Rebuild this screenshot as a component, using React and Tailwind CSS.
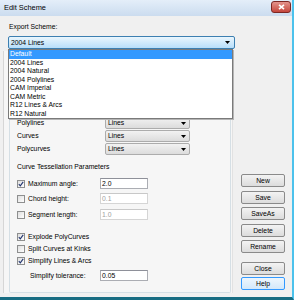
const SCHEMES = [
  "Default",
  "2004 Lines",
  "2004 Natural",
  "2004 Polylines",
  "CAM Imperial",
  "CAM Metric",
  "R12 Lines & Arcs",
  "R12 Natural",
];

function Arrow() {
  return (
    <svg width="5" height="3" viewBox="0 0 5 3" className="shrink-0">
      <path d="M0 0 H5 L2.5 3 Z" fill="#000" />
    </svg>
  );
}

function Combo({ value, className }) {
  return (
    <div
      className={`flex items-center justify-between rounded-[2px] border border-[#acacac] bg-gradient-to-b from-[#f2f2f2] to-[#dcdcdc] pl-[2px] pr-[3px] ${className}`}
    >
      <span>{value}</span>
      <Arrow />
    </div>
  );
}

function Check({ checked }) {
  return (
    <div className="flex h-[8px] w-[8px] shrink-0 items-center justify-center border border-[#8e8f8f] bg-gradient-to-br from-[#dedede] to-[#ffffff]">
      {checked && (
        <svg width="6" height="6" viewBox="0 0 6 6">
          <path d="M0.8 3.2 L2.3 4.8 L5.2 0.9" fill="none" stroke="#21346e" strokeWidth="1.1" />
        </svg>
      )}
    </div>
  );
}

function Field({ value, disabled }) {
  return (
    <div
      className={`flex h-[11px] w-[48px] items-center border border-[#abadb3] border-t-[#8e9099] bg-white pl-[1px] ${
        disabled ? "text-[#a0a0a0] border-[#d5d5d5] border-t-[#c8c8c8]" : ""
      }`}
    >
      {value}
    </div>
  );
}

function CheckRow({ label, checked, children, className = "" }) {
  return (
    <div className={`flex items-center ${className}`}>
      <div className="flex w-[83px] items-center gap-[3px]">
        <Check checked={checked} />
        <span>{label}</span>
      </div>
      {children}
    </div>
  );
}

function Btn({ children, className = "", focus }) {
  return (
    <div
      className={`flex h-[13px] items-center justify-center rounded-[2px] border ${
        focus
          ? "border-[#3399ff] bg-gradient-to-b from-[#eef6fd] to-[#d3e8fa]"
          : "border-[#8a8a8a] bg-gradient-to-b from-[#f3f3f3] to-[#dcdcdc]"
      } ${className}`}
    >
      {children}
    </div>
  );
}

export default function App() {
  return (
    <div className="flex h-[300px] w-[294px] flex-col border-r-2 border-b-[3px] border-r-[#4cc2ec] border-b-[#176c82] bg-[#f0f0f0] font-['Liberation_Sans',Arial,sans-serif] text-[6.8px] leading-[10px] text-black">
      <div className="flex h-[16px] shrink-0 items-center justify-between bg-gradient-to-b from-[#e4eef9] to-[#cbdcef] pl-[4px] pr-[1px]">
        <span className="text-[7.4px]">Edit Scheme</span>
        <div className="mb-[2px] flex h-[12px] w-[20px] items-center justify-center rounded-[3px] border border-[#7d2723] bg-gradient-to-b from-[#e3938c] to-[#c4453c]">
          <svg width="7" height="6" viewBox="0 0 7 6">
            <path d="M1 0.8 L6 5.2 M6 0.8 L1 5.2" stroke="#fff" strokeWidth="1.6" />
          </svg>
        </div>
      </div>

      <div className="relative flex flex-1 flex-col">
        <div className="pl-[9px] pt-[6px]">Export Scheme:</div>
        <div className="ml-[8px] mt-[4px] flex h-[13px] w-[227px] items-center justify-between rounded-[2px] border border-[#3c7fb1] bg-gradient-to-b from-[#eaf6fd] to-[#b7defa] pl-[2px] pr-[4px]">
          <span>2004 Lines</span>
          <Arrow />
        </div>

        <div className="mt-[2px] flex flex-1">
          <div className="mb-[4px] ml-[3px] flex w-[230px] flex-col border-l border-r border-l-[#d6d6d6] border-r-[#e2e2e2] bg-[#f6f6f6] pl-[5px] pr-[1px]">
            <div className="flex flex-1 flex-col rounded-b-[2px] border-x border-b border-[#d5dfe5] pl-[7px]">
              <div className="mt-[66px] flex flex-col gap-[1px]">
                {["Polylines", "Curves", "Polycurves"].map((r) => (
                  <div key={r} className="flex items-center">
                    <span className="w-[88px]">{r}</span>
                    <Combo value="Lines" className="h-[12px] w-[85px]" />
                  </div>
                ))}
              </div>

              <div className="mt-[7px]">Curve Tessellation Parameters</div>
              <CheckRow label="Maximum angle:" checked className="mt-[6px] h-[11px]">
                <Field value="2.0" />
              </CheckRow>
              <CheckRow label="Chord height:" className="mt-[4px] h-[11px]">
                <Field value="0.1" disabled />
              </CheckRow>
              <CheckRow label="Segment length:" className="mt-[5px] h-[11px]">
                <Field value="1.0" disabled />
              </CheckRow>

              <div className="mt-[11px] flex flex-col">
                <CheckRow label="Explode PolyCurves" checked className="h-[12px]" />
                <CheckRow label="Split Curves at Kinks" className="h-[12px]" />
                <CheckRow label="Simplify Lines & Arcs" checked className="h-[12px]" />
              </div>
              <div className="mt-[3px] flex h-[11px] items-center">
                <span className="ml-[13px] w-[70px]">Simplify tolerance:</span>
                <Field value="0.05" />
              </div>
            </div>
          </div>

          <div className="ml-[8px] flex w-[44px] flex-col">
            <Btn className="mt-[123px]">New</Btn>
            <Btn className="mt-[4px]">Save</Btn>
            <Btn className="mt-[3px]">SaveAs</Btn>
            <Btn className="mt-[4px]">Delete</Btn>
            <Btn className="mt-[3px]">Rename</Btn>
            <Btn className="mt-[9px]">Close</Btn>
            <Btn className="mt-[2px]" focus>
              Help
            </Btn>
          </div>
        </div>

        <div className="absolute left-[8px] top-[33px] w-[225px] border border-[#7a7a7a] bg-white shadow-[1px_1px_0_#b5b5b5]">
          {SCHEMES.map((s, i) => (
            <div
              key={s}
              className={`h-[8.5px] pl-[1px] leading-[8.5px] ${i === 0 ? "bg-[#3399ff] text-white" : ""}`}
            >
              {s}
            </div>
          ))}
        </div>
      </div>
    </div>
  );
}
